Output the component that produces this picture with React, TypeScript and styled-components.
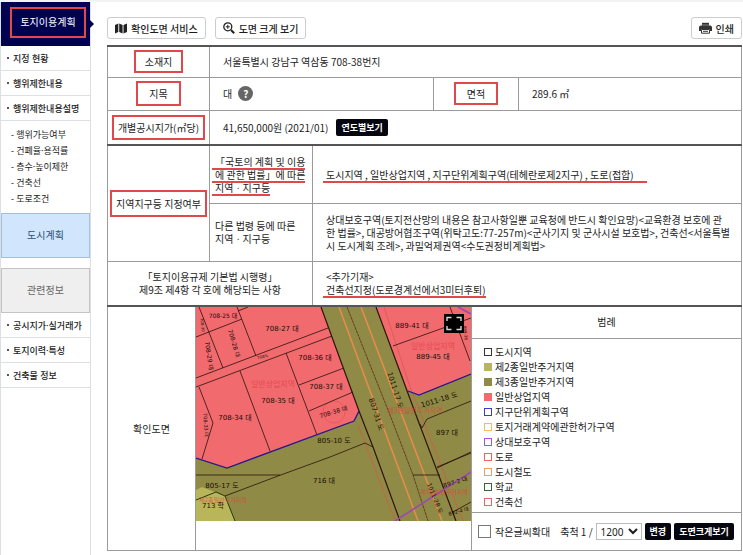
import React from "react";
import styled, { createGlobalStyle } from "styled-components";

const RED = "#e2474b";
const LINE = "#9b9b9b";

const GlobalStyle = createGlobalStyle`
  *, *::before, *::after { box-sizing: border-box; }
  body {
    margin: 0;
    background: #fff;
    color: #1c1c1c;
    font: 10px/13px "Noto Sans CJK KR", "Noto Sans", sans-serif;
  }
  button, select, input { font: inherit; color: inherit; margin: 0; }
  ul { list-style: none; margin: 0; padding: 0; }
`;

const Page = styled.div`
  display: grid;
  grid-template-columns: 91px minmax(0, 1fr);
  min-height: 100vh;
  border-top: 2px solid #f3f3f3;
`;

const Sidebar = styled.nav`
  border: solid #dcdfe3;
  border-width: 0 1px;
  font-family: "Noto Sans", "Noto Sans CJK KR", sans-serif;
`;

const Tab = styled.a<{ $tone: "navy" | "blue" | "gray" }>`
  position: relative;
  display: flex;
  align-items: center;
  justify-content: center;
  height: 45px;
  font-size: 10px;
  line-height: 15px;
  text-decoration: none;
  border: 1px solid;
  ${(p) => p.$tone === "navy" && "height: 44px; padding: 0 0 4px 5px; color: #fff; background: #00024f; border-color: #00024f;"}
  ${(p) => p.$tone === "blue" && "color: #2d4f73; background: #d1e6fd; border-color: #a5bedb;"}
  ${(p) => p.$tone === "gray" && "margin-top: 10px; color: #666; background: #efefef; border-color: #c4c4c4;"}
`;

const TabArrow = styled.span`
  position: absolute;
  left: 100%;
  top: 16px;
  border: 5px solid transparent;
  border-left-color: #00024f;
  border-right: 0;
`;

const MenuLink = styled.a`
  display: flex;
  align-items: center;
  gap: 4px;
  height: 25px;
  padding-left: 6px;
  border-bottom: 1px solid #dcdfe3;
  color: #1c1c1c;
  font-size: 9px;
  font-weight: 500;
  text-decoration: none;
  white-space: nowrap;
  &::before {
    content: "";
    flex: none;
    width: 2px;
    height: 2px;
    background: #555;
  }
`;

const SubMenu = styled.ul`
  padding: 6px 0 6px 10px;
`;

const SubLink = styled.a`
  display: block;
  color: #1c1c1c;
  font-size: 9px;
  line-height: 16px;
  text-decoration: none;
`;

const Main = styled.main`
  padding: 15px 1px 0 16px;
`;

const Toolbar = styled.div`
  display: flex;
  gap: 9px;
  margin-bottom: 6px;
`;

const ToolButton = styled.button<{ $end?: boolean }>`
  display: flex;
  align-items: center;
  gap: 4px;
  height: 22px;
  padding: 0 7px;
  border: 1px solid #ccc;
  border-radius: 3px;
  background: #fff;
  font-weight: 500;
  white-space: nowrap;
  margin-left: ${(p) => (p.$end ? "auto" : "0")};
`;

const InfoTable = styled.table`
  width: 100%;
  table-layout: fixed;
  border-collapse: collapse;
  border-top: 2px solid #555;
`;

const Col = styled.col<{ $w?: number }>`
  width: ${(p) => (p.$w ? `${p.$w}px` : "auto")};
`;

const Row = styled.tr<{ $h: number; $strong?: boolean }>`
  height: ${(p) => p.$h}px;
  ${(p) => p.$strong && "border-top: 2px solid #555;"}
`;

const Head = styled.th`
  padding: 0;
  border: 1px solid ${LINE};
  font-weight: 400;
  text-align: center;
`;

const SubHead = styled(Head)`
  padding: 0 6px 0 5px;
  text-align: left;
`;

const Cell = styled.td`
  padding: 0 4px 0 13px;
  border: 1px solid ${LINE};
`;

const Inline = styled.div<{ $gap: number }>`
  display: flex;
  align-items: center;
  gap: ${(p) => p.$gap}px;
`;

const Boxed = styled.span<{ $x: number; $y: number }>`
  display: inline-block;
  padding: ${(p) => `${p.$y}px ${p.$x}px`};
  border: 2px solid ${RED};
  white-space: nowrap;
`;

const Underlined = styled.span<{ $extra?: number }>`
  position: relative;
  display: block;
  width: fit-content;
  padding-right: ${(p) => p.$extra ?? 0}px;
  white-space: nowrap;
  &::after {
    content: "";
    position: absolute;
    left: -3px;
    right: 0;
    bottom: -2px;
    height: 2px;
    background: ${RED};
  }
`;

const HelpButton = styled.button`
  width: 15px;
  height: 15px;
  padding: 0;
  border: 0;
  border-radius: 50%;
  background: #666;
  color: #fff;
  font-weight: 700;
  line-height: 15px;
`;

const DarkButton = styled.button`
  height: 17px;
  padding: 0 5px;
  border: 0;
  border-radius: 2px;
  background: #05060f;
  color: #fff;
  font-size: 9px;
  font-weight: 700;
  line-height: 17px;
  white-space: nowrap;
`;

const MapCell = styled.td`
  padding: 0;
  vertical-align: top;
  border-bottom: 1px solid ${LINE};
`;

const MapFrame = styled.div`
  position: relative;
  svg { display: block; width: 100%; }
`;

const ExpandButton = styled.button`
  position: absolute;
  top: 7px;
  right: 7px;
  width: 20px;
  height: 19px;
  padding: 2px;
  border: 0;
  background: #000;
`;

const LegendCell = styled.td`
  padding: 0;
  border: 1px solid ${LINE};
  vertical-align: top;
`;

const LegendTitle = styled.h2`
  margin: 0;
  height: 32px;
  border-bottom: 1px solid ${LINE};
  font-size: 10px;
  font-weight: 400;
  line-height: 30px;
  text-align: center;
`;

const LegendList = styled.ul`
  padding: 5px 0 3px 12px;
  border-bottom: 1px solid ${LINE};
`;

const LegendItem = styled.li<{ $color: string; $fill?: boolean }>`
  display: flex;
  align-items: center;
  gap: 3px;
  line-height: 15px;
  &::before {
    content: "";
    width: 8px;
    height: 8px;
    border: 1px solid ${(p) => p.$color};
    background: ${(p) => (p.$fill ? p.$color : "#fff")};
  }
`;

const MapControls = styled.form`
  display: flex;
  align-items: center;
  height: 37px;
  padding: 0 6px;
  gap: 3px;
  white-space: nowrap;
`;

const Label = styled.label`
  display: flex;
  align-items: center;
  gap: 4px;
  margin-right: 7px;
`;

const CheckBox = styled.input`
  appearance: none;
  width: 13px;
  height: 13px;
  border: 1px solid #777;
  background: #fff;
`;

const ScaleLabel = styled.label`
  white-space: nowrap;
`;

const ScaleSelect = styled.select`
  width: 46px;
  height: 17px;
  padding: 0;
  border: 1px solid #bbb;
  background: #fff;
  font-family: "Noto Sans", sans-serif;
  line-height: 15px;
`;

const areaMenu = ["지정 현황", "행위제한내용", "행위제한내용설명"];
const subMenu = ["행위가능여부", "건폐율·용적률", "층수·높이제한", "건축선", "도로조건"];
const relatedMenu = ["공시지가·실거래가", "토지이력·특성", "건축물 정보"];

const legend: { name: string; color: string; fill?: boolean }[] = [
  { name: "도시지역", color: "#333" },
  { name: "제2종일반주거지역", color: "#b9b55b", fill: true },
  { name: "제3종일반주거지역", color: "#8f8a45", fill: true },
  { name: "일반상업지역", color: "#f16a6e", fill: true },
  { name: "지구단위계획구역", color: "#3a3ad0" },
  { name: "토지거래계약에관한허가구역", color: "#f3b868" },
  { name: "상대보호구역", color: "#a94fe0" },
  { name: "도로", color: "#ee6167" },
  { name: "도시철도", color: "#f0a062" },
  { name: "학교", color: "#2f6b35" },
  { name: "건축선", color: "#ee6167" },
];

type MapLabel = [text: string, x: number, y: number, angle: number, size: number];

const parcels: MapLabel[] = [
  ["708-25 대", 27, 11, 0, 6],
  ["708-27 대", 86, 24, 0, 7],
  ["708-28 대", 36, 37, 74, 6],
  ["708-29 대", 11, 49, 82, 6],
  ["708-30", 5, 18, 84, 4],
  ["708도", 67, 51, -14, 4],
  ["708-36 대", 119, 53, 0, 7],
  ["708-37 대", 130, 82, 0, 7],
  ["708-38 대", 138, 107, -17, 6],
  ["708-35 대", 82, 96, 0, 7],
  ["708-34 대", 39, 113, 0, 7],
  ["708-33 대", 8, 118, 86, 5],
  ["889-41 대", 216, 21, 0, 7],
  ["889-45 대", 237, 52, 0, 7],
  ["889-38", 268, 26, 84, 4],
  ["1011-17 도", 197, 84, 72, 7],
  ["807-31 도", 178, 108, 72, 7],
  ["1011-18 도", 244, 95, -17, 7],
  ["897 대", 251, 128, 0, 7],
  ["897-2 대", 260, 177, -17, 6],
  ["1011-28 도", 237, 192, 68, 6],
  ["892-4 대", 263, 206, -15, 5],
  ["805-10 도", 138, 136, 0, 7],
  ["716 대", 128, 176, 0, 7],
  ["805-17 도", 26, 181, 0, 7],
  ["713 학", 17, 201, 0, 7],
];

const zones: MapLabel[] = [
  ["일반상업지역", 77, 80, 0, 8],
  ["일반상업지역", 237, 42, 0, 8],
  ["제3종일반주거지역", 219, 106, 0, 7],
  ["제3종일반주거지역", 248, 187, 0, 6],
  ["제2종일반주거지역", 27, 195, 0, 6],
];

const parcelLines = [
  "M3 0 27 61M0 30 46 12M41 0 60 49M42 4 52 0",
  "M0 71 132 21M0 80 136 29",
  "M3 80 17 116 6 152M44 64 74 144M90 46 121 128",
  "M103 78 148 61M113 104 157 85",
  "M197 39 275 11M254 0 274 54",
  "M224 117 226 121 231 112 275 94",
  "M241 160 275 146M241 161 275 145M217 168H244M257 205 275 195",
  "M0 168H84M29 189 82 169 134 150 169 136 177 140",
].join("");

function CadastralMap() {
  return (
    <svg viewBox="0 0 275 214" role="img" aria-label="확인도면">
      <rect width="275" height="214" fill="#8f8a45" />
      <path d="M0 0H125L163 104 158 114 31 161 0 151Z" fill="#f16a6e" />
      <path d="M180 0H275V67L223 88 212 84Z" fill="#f16a6e" />
      <path d="M0 183 6 180 29 189 39 214H0Z" fill="#b9b55b" />
      <g fill="none">
        <path d="M188 0 214 80 267 214M162 118 199 214" stroke="#dc5549" strokeWidth=".7" />
        <circle cx="138" cy="105" r="11" stroke="#e65258" strokeWidth=".7" />
        <path d="M143 0 222 214M165 0 246 214" stroke="#e88d4c" strokeWidth="1.5" />
        <path d="M151 0 194 108 217 168 232 214" stroke="#5b2814" strokeWidth=".8" strokeDasharray="3 .6" />
        <path d={parcelLines} stroke="#2a120e" strokeWidth=".8" />
        <path d="M125 0 163 104 177 140 204 214M180 0 220 108 260 214" stroke="#32120c" strokeWidth="1.2" />
        <path d="M0 151 31 161 158 114 163 104M212 84 223 88 275 67" stroke="#2a1590" strokeWidth="1.3" />
        <path d="M199 214 275 165M262 0 275 7" stroke="#9d48b5" strokeWidth="1.6" />
        <path d="M0 193 20 185 29 189 39 214" stroke="#233d12" />
      </g>
      <g fill="#e3383f" fillOpacity=".7" textAnchor="middle" fontFamily='"Noto Sans CJK KR", sans-serif'>
        {zones.map(([text, x, y, , size], i) => (
          <text key={i} x={x} y={y} fontSize={size}>{text}</text>
        ))}
      </g>
      <g fill="#1b0c08" textAnchor="middle" fontFamily='"DejaVu Sans", "Noto Sans CJK KR", sans-serif'>
        {parcels.map(([text, x, y, angle, size]) => (
          <text key={text} x={x} y={y} fontSize={size} transform={`rotate(${angle} ${x} ${y})`}>{text}</text>
        ))}
      </g>
    </svg>
  );
}

const FoldedMapIcon = () => (
  <svg width="12" height="11" viewBox="0 0 12 11" fill="#222" aria-hidden="true">
    <path d="M0 2 3.3.5V9L0 10.5ZM4.2.5 7.6 2v8.5L4.2 9ZM8.5 2 12 .5V9L8.5 10.5Z" />
  </svg>
);

const ZoomInIcon = () => (
  <svg width="12" height="12" viewBox="0 0 12 12" fill="none" stroke="#222" aria-hidden="true">
    <circle cx="4.8" cy="4.8" r="4" strokeWidth="1.3" />
    <path d="M2.8 4.8h4M4.8 2.8v4" />
    <path d="m8 8 3.2 3.2" strokeWidth="2" />
  </svg>
);

const PrinterIcon = () => (
  <svg width="13" height="12" viewBox="0 0 13 12" aria-hidden="true">
    <path d="M3 .8h7V4H3Z" fill="#333" />
    <path d="M1.2 3.5h10.6L13 5v4h-2V7H2v2H0V5Z" fill="#333" />
    <path d="M2.5 7.5h8v3.7h-8Z" fill="#fff" stroke="#333" />
    <path d="M4 9.3h5" stroke="#333" />
    <path d="M2 3h9" stroke="#bbb" strokeWidth=".6" />
  </svg>
);

const ExpandIcon = () => (
  <svg width="16" height="15" viewBox="0 0 16 15" fill="none" stroke="#d8d8d8" strokeWidth="1.4" aria-hidden="true">
    <path d="M1 5V1.5h4.5M10.5 1.5H15V5M15 10v3.5h-4.5M5.5 13.5H1V10" />
  </svg>
);

export default function App() {
  return (
    <>
      <GlobalStyle />
      <Page>
        <Sidebar>
          <Tab href="#plan" $tone="navy">
            <Boxed $x={8} $y={6}>토지이용계획</Boxed>
            <TabArrow />
          </Tab>
          <ul>
            {areaMenu.map((t) => <li key={t}><MenuLink href="#plan">{t}</MenuLink></li>)}
          </ul>
          <SubMenu>
            {subMenu.map((t) => <li key={t}><SubLink href="#plan">- {t}</SubLink></li>)}
          </SubMenu>
          <Tab href="#city" $tone="blue">도시계획</Tab>
          <Tab href="#related" $tone="gray">관련정보</Tab>
          <ul>
            {relatedMenu.map((t) => <li key={t}><MenuLink href="#related">{t}</MenuLink></li>)}
          </ul>
        </Sidebar>

        <Main>
          <Toolbar>
            <ToolButton type="button"><FoldedMapIcon />확인도면 서비스</ToolButton>
            <ToolButton type="button"><ZoomInIcon />도면 크게 보기</ToolButton>
            <ToolButton type="button" $end><PrinterIcon />인쇄</ToolButton>
          </Toolbar>

          <InfoTable>
            <colgroup>
              <Col $w={88} />
              <Col $w={14} />
              <Col $w={103} />
              <Col $w={121} />
              <Col $w={38} />
              <Col $w={47} />
              <Col />
            </colgroup>
            <tbody>
              <Row $h={31}>
                <Head scope="row" colSpan={2}><Boxed $x={9} $y={3}>소재지</Boxed></Head>
                <Cell colSpan={5}>서울특별시 강남구 역삼동 708-38번지</Cell>
              </Row>
              <Row $h={33}>
                <Head scope="row" colSpan={2}><Boxed $x={11} $y={4}>지목</Boxed></Head>
                <Cell colSpan={2}>
                  <Inline $gap={6}>대<HelpButton type="button" aria-label="지목 도움말">?</HelpButton></Inline>
                </Cell>
                <Head scope="row" colSpan={2}><Boxed $x={11} $y={3}>면적</Boxed></Head>
                <Cell>289.6 ㎡</Cell>
              </Row>
              <Row $h={35}>
                <Head scope="row" colSpan={2}><Boxed $x={4} $y={4}>개별공시지가(㎡당)</Boxed></Head>
                <Cell colSpan={5}>
                  <Inline $gap={8}>41,650,000원 (2021/01)<DarkButton type="button">연도별보기</DarkButton></Inline>
                </Cell>
              </Row>
              <Row $h={58} $strong>
                <Head scope="rowgroup" colSpan={2} rowSpan={2}><Boxed $x={4} $y={5}>지역지구등 지정여부</Boxed></Head>
                <SubHead scope="row">
                  <Underlined>「국토의 계획 및 이용</Underlined>
                  <Underlined>에 관한 법률」에 따른</Underlined>
                  <Underlined>지역ㆍ지구등</Underlined>
                </SubHead>
                <Cell colSpan={4}>
                  <Underlined $extra={13}>도시지역 , 일반상업지역 , 지구단위계획구역(테헤란로제2지구) , 도로(접합)</Underlined>
                </Cell>
              </Row>
              <Row $h={58}>
                <SubHead scope="row">다른 법령 등에 따른<br />지역ㆍ지구등</SubHead>
                <Cell colSpan={4}>
                  상대보호구역(토지전산망의 내용은 참고사항일뿐 교육청에 반드시 확인요망)&lt;교육환경 보호에 관<br />
                  한 법률&gt;, 대공방어협조구역(위탁고도:77-257m)&lt;군사기지 및 군사시설 보호법&gt;, 건축선&lt;서울특별<br />
                  시 도시계획 조례&gt;, 과밀억제권역&lt;수도권정비계획법&gt;
                </Cell>
              </Row>
              <Row $h={45}>
                <Head scope="row" colSpan={3}>「토지이용규제 기본법 시행령」<br />제9조 제4항 각 호에 해당되는 사항</Head>
                <Cell colSpan={4}>
                  &lt;추가기재&gt;
                  <Underlined>건축선지정(도로경계선에서3미터후퇴)</Underlined>
                </Cell>
              </Row>
              <Row $h={244} $strong>
                <Head scope="row">확인도면</Head>
                <MapCell colSpan={4}>
                  <MapFrame>
                    <CadastralMap />
                    <ExpandButton type="button" aria-label="도면 크게 보기"><ExpandIcon /></ExpandButton>
                  </MapFrame>
                </MapCell>
                <LegendCell colSpan={2}>
                  <LegendTitle>범례</LegendTitle>
                  <LegendList>
                    {legend.map((l) => (
                      <LegendItem key={l.name} $color={l.color} $fill={l.fill}>{l.name}</LegendItem>
                    ))}
                  </LegendList>
                  <MapControls>
                    <Label><CheckBox type="checkbox" />작은글씨확대</Label>
                    <ScaleLabel htmlFor="scale">축척 1 /</ScaleLabel>
                    <ScaleSelect id="scale" defaultValue="1200">
                      <option>600</option>
                      <option>1200</option>
                      <option>2400</option>
                    </ScaleSelect>
                    <DarkButton type="button">변경</DarkButton>
                    <DarkButton type="button">도면크게보기</DarkButton>
                  </MapControls>
                </LegendCell>
              </Row>
            </tbody>
          </InfoTable>
        </Main>
      </Page>
    </>
  );
}
